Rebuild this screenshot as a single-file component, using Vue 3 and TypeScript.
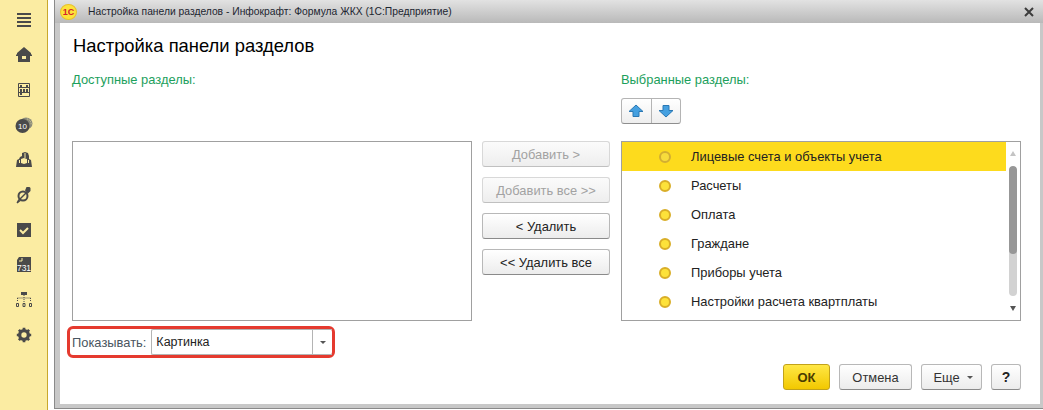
<script setup lang="ts">
const items: string[] = ['Лицевые счета и объекты учета', 'Расчеты', 'Оплата', 'Граждане', 'Приборы учета', 'Настройки расчета квартплаты']
</script>

<template>
  <div class="page">
    <aside class="side">
      <svg class="ic" width="18" height="18" viewBox="0 0 18 18"><path fill="#4a4a4a" d="M2 2h14v2H2zM2 6h14v2H2zM2 10h14v2H2zM2 14h14v2H2z"/></svg>
      <svg class="ic" width="18" height="18" viewBox="0 0 18 18"><path fill="#4a4a4a" fill-rule="evenodd" d="M9 1 16 7v1l1 1v1h-2v6H3v-6H1V9l1-1V7zM7 10v3h4v-3z"/></svg>
      <svg class="ic" width="18" height="18" viewBox="0 0 18 18"><path fill="none" stroke="#4a4a4a" d="M3.500 2.500h11v13h-11zM3.500 6.500h11M3.500 11.500h11"/><path fill="#4a4a4a" d="M5 4h2v2H5zM11 4h2v2h-2zM5 8h2v3H5zM8 8h2v3H8zM11 8h2v3h-2zM5 12h2v2H5z"/></svg>
      <svg class="ic" width="18" height="18" viewBox="0 0 18 18"><ellipse cx="11" cy="7.500" rx="6.500" ry="6" fill="#8a8a7a"/><path fill="none" stroke="#d8cf9a" stroke-dasharray="1 1" d="M12 3a5 5 0 0 1 4 6"/><circle cx="7.500" cy="10" r="7" fill="#4a4a4a"/><text x="7.500" y="13" font-size="8" text-anchor="middle" fill="#fff" font-family="Liberation Sans, sans-serif">10</text></svg>
      <svg class="ic" width="18" height="18" viewBox="0 0 18 18"><path fill="#4a4a4a" d="M7 2l3-1 3 1 1 3v3l2 1 1 7H1l1-7 2-1 1-2 2-1z"/><path fill="#fbeca2" d="M6 8l3-1 3 1v4l-3 1-3-1z"/><path fill="none" stroke="#fbeca2" d="M10 2v5M4.500 9v3M13.500 9v3"/></svg>
      <svg class="ic" width="18" height="18" viewBox="0 0 18 18"><circle cx="8" cy="10" r="4.500" fill="none" stroke="#4a4a4a" stroke-width="2"/><path fill="#4a4a4a" d="M11.500 1h3l1 1v3l-2.500 2.500-3-3zM3.500 13l2 2-3 2.500-1-1z"/><path stroke="#4a4a4a" stroke-width="1.500" d="M5 13 12 6"/></svg>
      <svg class="ic" width="18" height="18" viewBox="0 0 18 18"><path fill="#4a4a4a" d="M2 2h14v14H2z"/><path fill="none" stroke="#fbeca2" stroke-width="2" d="M5 9l3 3 5-5"/></svg>
      <svg class="ic" width="18" height="18" viewBox="0 0 18 18"><path fill="#4a4a4a" d="M4 1h12v15H2V4z"/><path stroke="#fbeca2" fill="none" d="M4 5h3V2"/><text x="9" y="14.500" font-size="8.500" text-anchor="middle" fill="#fff" font-family="Liberation Sans, sans-serif">731</text></svg>
      <svg class="ic" width="18" height="18" viewBox="0 0 18 18"><path fill="#4a4a4a" d="M6 1h6v3H6z"/><path fill="none" stroke="#4a4a4a" stroke-dasharray="1 1" d="M9 4v7M2.500 7h13M2.500 7v4M15.500 7v4"/><path fill="none" stroke="#4a4a4a" d="M1.500 12.500h2v3h-2zM8 12.500h2v3H8zM14.500 12.500h2v3h-2z"/></svg>
      <svg class="ic" width="18" height="18" viewBox="-1 -1 20 20"><circle cx="9" cy="9" r="5" fill="none" stroke="#4a4a4a" stroke-width="3.400"/><path stroke="#4a4a4a" stroke-width="3" d="M9 1v16M1 9h16M3.300 3.300l11.400 11.400M14.700 3.300 3.300 14.700"/><circle cx="9" cy="9" r="3" fill="#fbeca2"/></svg>
    </aside>

    <section class="win">
      <header class="titlebar">
        <span class="logo">1С</span>
        <span class="wintitle">Настройка панели разделов - Инфокрафт: Формула ЖКХ (1С:Предприятие)</span>
        <svg class="close" width="10" height="10" viewBox="0 0 10 10"><path stroke="#3c3c3c" stroke-width="2" d="M1 1l8 8M9 1l-8 8"/></svg>
      </header>
      <div class="content">
        <h1>Настройка панели разделов</h1>
        <div class="grid">
          <div class="lab left-lab">Доступные разделы:</div>
          <div class="lab right-lab">Выбранные разделы:</div>
          <div class="updown">
            <button class="ud"><svg width="16" height="14" viewBox="0 0 16 14"><path fill="#45a0e0" stroke="#2a78b4" d="M8 1 15 7.500h-4v5H5v-5H1z"/></svg></button>
            <button class="ud"><svg width="16" height="14" viewBox="0 0 16 14"><path fill="#45a0e0" stroke="#2a78b4" d="M8 13 15 6.500h-4v-5H5v5H1z"/></svg></button>
          </div>
          <div class="list"></div>
          <div class="mid">
            <button class="btn off">Добавить &gt;</button>
            <button class="btn off">Добавить все &gt;&gt;</button>
            <button class="btn">&lt; Удалить</button>
            <button class="btn">&lt;&lt; Удалить все</button>
          </div>
          <div class="list sel">
            <ul>
              <li v-for="(it, i) in items" :key="it" :class="{ cur: i === 0 }"><span class="dot"></span>{{ it }}</li>
            </ul>
            <div class="bar">
              <i class="up"></i>
              <div class="track"><div class="thumb"></div></div>
              <i class="down"></i>
            </div>
          </div>
        </div>
        <div class="show">
          <span>Показывать:</span>
          <div class="combo"><span class="val">Картинка</span><span class="drop"><i></i></span></div>
        </div>
        <footer class="foot">
          <button class="fb ok">ОК</button>
          <button class="fb cancel">Отмена</button>
          <button class="fb more">Еще<i></i></button>
          <button class="fb help">?</button>
        </footer>
      </div>
    </section>
  </div>
</template>

<style>
html, body { margin: 0; background: #fff; overflow: hidden; }
</style>

<style scoped>
.page { width: 1043px; height: 410px; display: flex; font-family: "Liberation Sans", Arial, sans-serif; background: #fff; overflow: hidden; }
.side { width: 48px; height: 410px; box-sizing: border-box; background: #fbeca2; border-right: 1px solid #c9a82c; flex: none; display: flex; flex-direction: column; align-items: center; padding: 11px 0 0 0; gap: 17px; margin-right: 6px; }
.ic { display: block; flex: none; }
.win { width: 989px; height: 409px; box-sizing: border-box; flex: none; border-left: 1px solid #8a8a8a; border-bottom: 1px solid #8a8a8a; background: #c8c8c8; display: flex; flex-direction: column; }
.titlebar { height: 23px; flex: none; display: flex; align-items: center; background: linear-gradient(#e2e2e2, #b9b9b9); padding-left: 5px; }
.logo { width: 17px; height: 16px; box-sizing: border-box; border-radius: 50%; background: #fde23a; border: 1px solid #e8c22a; color: #d3222a; font: 700 9px/14px "Liberation Sans", sans-serif; text-align: center; flex: none; }
.wintitle { font-size: 10.300px; color: #1c2530; margin-left: 11px; flex: 1; }
.close { margin-right: 9px; }
.content { margin: 0 3px 4px 5px; flex: 1; background: #fff; display: flex; flex-direction: column; min-height: 0; box-sizing: border-box; padding: 13px 0 0 12px; }
h1 { margin: 0; font-weight: 400; font-size: 18.400px; line-height: 20px; padding-left: 1px; color: #000; }
.grid { display: grid; grid-template-columns: 410px 139px 399px; grid-template-rows: 62px 20px 180px; margin-top: 3px; }
.lab { color: #1ca05c; font-size: 12.900px; line-height: 16px; }
.left-lab { grid-column: 1; grid-row: 1; align-self: start; margin-top: 13px; }
.right-lab { grid-column: 3; grid-row: 1; align-self: start; margin-top: 13px; }
.updown { grid-column: 3; grid-row: 1 / span 2; align-self: start; margin-top: 39px; display: flex; width: 60px; height: 26px; box-sizing: border-box; border: 1px solid #b4b4b4; border-bottom-color: #8e8e8e; border-radius: 3px; background: linear-gradient(#fff, #eee); }
.ud { flex: 1; padding: 0; border: 0; background: none; display: flex; align-items: center; justify-content: center; }
.ud + .ud { border-left: 1px solid #b4b4b4; }
.list { grid-row: 3; grid-column: 1; width: 400px; height: 180px; box-sizing: border-box; border: 1px solid #a0a0a0; background: #fff; }
.mid { grid-row: 3; grid-column: 2; display: flex; flex-direction: column; gap: 10px; }
.btn { width: 128px; height: 26px; box-sizing: border-box; padding: 0; font: 12.900px "Liberation Sans", sans-serif; color: #222; border: 1px solid #b8b8b8; border-bottom-color: #8a8a8a; border-radius: 3px; background: linear-gradient(#fff, #ececec); }
.btn.off { color: #a2a2a2; border-color: #d8d8d8; border-bottom-color: #c0c0c0; background: linear-gradient(#fbfbfb, #eeeeee); }
.sel { grid-column: 3; width: 400px; display: flex; overflow: hidden; }
ul { list-style: none; margin: 0; padding: 0; width: 384px; flex: none; }
li { height: 29px; display: flex; align-items: center; font-size: 12.900px; color: #222; padding-left: 37px; }
li.cur { background: #fddb1d; }
.dot { width: 12px; height: 12px; box-sizing: border-box; border-radius: 50%; background: #fde23a; border: 2px solid #d9ae28; margin-right: 20px; flex: none; }
.cur .dot { background: #f7dc3c; border-color: #d2ae32; }
.bar { flex: 1; display: flex; flex-direction: column; align-items: center; padding: 9px 0 9px; }
.up, .down { display: block; width: 0; height: 0; border-left: 3.500px solid transparent; border-right: 3.500px solid transparent; flex: none; }
.up { border-bottom: 5px solid #c4c4c4; }
.down { border-top: 5px solid #555; }
.track { width: 8px; flex: 1; margin: 10px 0; border-radius: 4px; background: #d2d2d2; overflow: hidden; }
.thumb { height: 88px; background: #979797; border-radius: 4px; }
.show { width: 268px; height: 32px; box-sizing: border-box; margin: 5px 0 0 -5px; border: 3px solid #e53a2f; border-radius: 6px; display: flex; align-items: center; padding-left: 2px; font-size: 12.900px; color: #4a5560; background: #fff; }
.combo { margin-left: 5px; flex: 1; height: 26px; box-sizing: border-box; border: 1px solid #b4b4b4; border-right: 0; border-radius: 2px 0 0 2px; display: flex; align-items: center; color: #222; }
.val { flex: 1; padding-left: 4px; font-size: 12.500px; }
.drop { width: 20px; height: 100%; box-sizing: border-box; border-left: 1px solid #b4b4b4; display: flex; align-items: center; justify-content: center; }
.drop i, .more i { display: block; width: 0; height: 0; border-left: 3px solid transparent; border-right: 3px solid transparent; border-top: 3px solid #555; }
.foot { display: flex; gap: 9px; margin: 6px 0 0 711px; }
.fb { height: 26px; box-sizing: border-box; padding: 0; font: 12.900px "Liberation Sans", sans-serif; color: #333; border: 1px solid #b8b8b8; border-bottom-color: #8a8a8a; border-radius: 3px; background: linear-gradient(#fff, #ececec); flex: none; }
.ok { width: 47px; font-weight: 700; font-size: 13px; color: #4a3c00; background: linear-gradient(#ffe745, #f2c800); border-color: #c2a21a; }
.cancel { width: 73px; }
.more { width: 61px; display: flex; align-items: center; justify-content: center; gap: 7px; padding-left: 3px; }
.help { width: 30px; font-weight: 700; font-size: 14px; color: #222; }
</style>
